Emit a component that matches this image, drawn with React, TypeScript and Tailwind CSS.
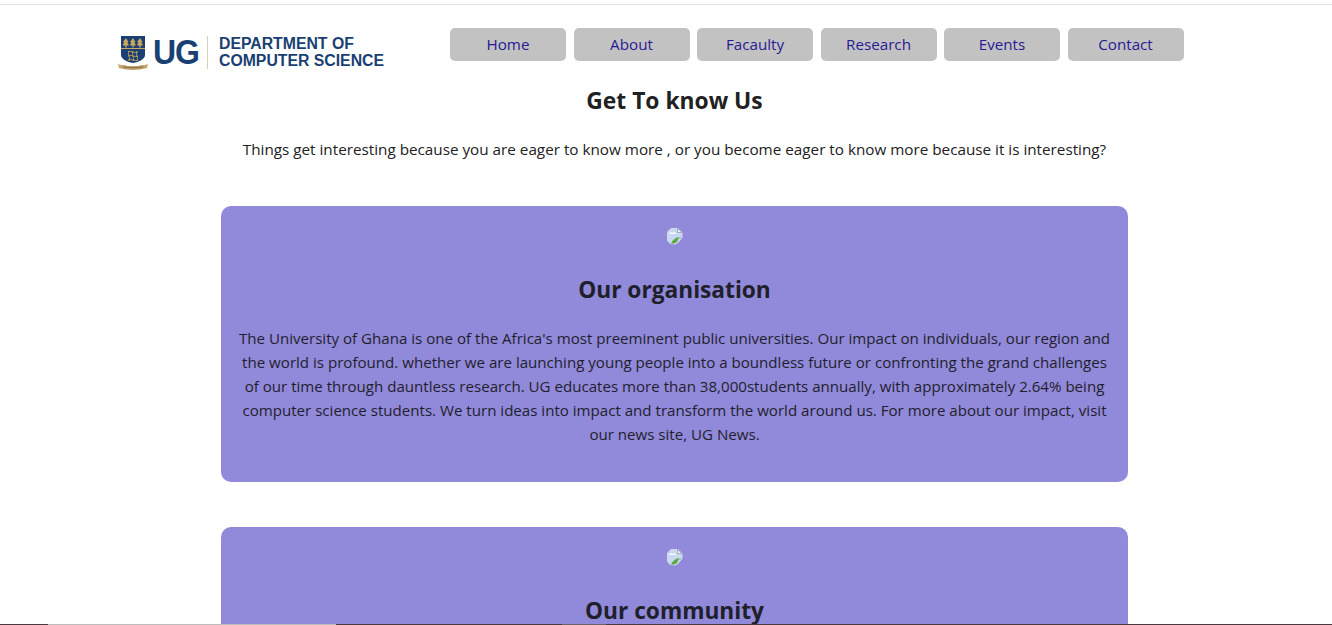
const navItems = ["Home", "About", "Facaulty", "Research", "Events", "Contact"];

function BrokenImage() {
  return (
    <svg width="16" height="17" viewBox="0 0 16 17" className="block">
      <path d="M4 0.500h7l4 4v5l-4 5-3 1.500-5-0.500-2.500-3V4z" fill="#c6d8f2" stroke="#d6d8e6" />
      <path d="M10.500 0.500v4h4.500z" fill="#f4f4f6" stroke="#8f90a0" strokeWidth="0.7" />
      <path d="M2 6c1-2 3-2 4-1 1-1 3-1 3 1z" fill="#fff" />
      <path d="M4 15.500c1-3 5-6 8-6.500l-2 5-3 1.500z" fill="#58a83f" />
      <path d="M12 10l2-1-1 2z" fill="#7a9a78" />
    </svg>
  );
}

function Crest() {
  return (
    <svg width="30" height="35" viewBox="0 0 30 35" className="block shrink-0">
      <path d="M3 0h24v19c0 4-6 7-12 8C9 26 3 23 3 19z" fill="#1a3f73" />
      <rect x="3" y="12" width="24" height="1" fill="#c9a75e" />
      <path d="M8 2l2.500 4-1.200 0 1.700 3.500h-2.300v2h-1.400v-2H4.500L6.200 6H5z" fill="#c9a75e" />
      <path d="M15 2l2.500 4-1.200 0 1.700 3.500h-2.300v2h-1.400v-2h-2.300L13.200 6H12z" fill="#c9a75e" />
      <path d="M22 2l2.500 4-1.200 0 1.700 3.500h-2.300v2h-1.400v-2h-2.300L20.200 6H19z" fill="#c9a75e" />
      <path d="M10 16c3-2 7 2 10 0M10 20c3-2 7 2 10 0M10 24c3-2 7 2 10 0M11 15c-2 3 2 7 0 10M15 15c-2 3 2 7 0 10M19 15c-2 3 2 7 0 10" fill="none" stroke="#c9a75e" strokeWidth="0.9" />
      <path d="M0 28c2 1 4 1 6 1 3 1 6 1 9 1s6 0 9-1c2 0 4 0 6-1l-1 4c-4 1-9 2-14 2S5 33 1 32z" fill="#c2a66c" />
      <path d="M5 31c6 1 14 1 20 0" fill="none" stroke="#6d5a34" strokeWidth="0.8" />
    </svg>
  );
}

function Logo() {
  return (
    <div className="flex items-start w-[266px] h-[36px] font-['Liberation_Sans',sans-serif] text-[#1a3f73]">
      <Crest />
      <span className="ml-[5px] mt-[-2px] text-[32px] leading-[36px] font-bold tracking-[-1px] scale-y-[1.08]">UG</span>
      <span className="ml-[8px] w-px h-[33px] bg-[#d9cfb5]" />
      <div className="ml-[11px] mt-[-1px] font-bold text-[15.8px] leading-[17px] whitespace-nowrap">
        <div>DEPARTMENT OF</div>
        <div>COMPUTER SCIENCE</div>
      </div>
    </div>
  );
}

function Card({ title, children }: { title: string; children?: React.ReactNode }) {
  return (
    <section className="w-[907px] h-[276px] shrink-0 rounded-[10px] bg-[#9189d9] px-[15px] pt-[22px] text-center text-[#1f1f2e]">
      <div className="flex justify-center"><BrokenImage /></div>
      <h2 className="mt-[29px] text-[22.7px] leading-[32px] font-bold text-[#20202a]">{title}</h2>
      <p className="mt-[20px] text-[15.1px] leading-6">{children}</p>
    </section>
  );
}

export default function App() {
  return (
    <div className="h-screen overflow-hidden bg-white font-['Open_Sans',sans-serif] text-[#212121] relative">
      <div className="mt-1 h-px bg-[#e1e1e1]" />
      <header className="flex items-start pl-[118px] pt-[23px]">
        <div className="mt-[8px]"><Logo /></div>
        <nav className="ml-[66px] flex gap-[7.5px]">
          {navItems.map((item) => (
            <a key={item} className="w-[116px] h-[33px] pb-px rounded-[5px] bg-[#c2c2c2] flex items-center justify-center text-[15.2px] font-medium text-[#281a94]">
              {item}
            </a>
          ))}
        </nav>
      </header>
      <main className="flex flex-col items-center pl-[17px]">
        <h1 className="mt-[13px] text-[22.8px] leading-8 font-bold">Get To know Us</h1>
        <p className="mt-[20px] text-[15.25px] leading-6">Things get interesting because you are eager to know more , or you become eager to know more because it is interesting?</p>
        <div className="mt-[45px] flex flex-col gap-[45px]">
          <Card title="Our organisation">
            The University of Ghana is one of the Africa's most preeminent public universities. Our impact on individuals, our region and the world is profound. whether we are launching young people into a boundless future or confronting the grand challenges of our time through dauntless research. UG educates more than 38,000students annually, with approximately 2.64% being computer science students. We turn ideas into impact and transform the world around us. For more about our impact, visit our news site, UG News.
          </Card>
          <Card title="Our community" />
        </div>
      </main>
      <div className="fixed bottom-0 inset-x-0 h-px flex">
        <div className="w-[48px] bg-[#4a3a40]" />
        <div className="w-[288px] bg-[#bdbdbd]" />
        <div className="w-[226px] bg-[#4a3a40]" />
        <div className="w-[44px] bg-[#6a6266]" />
        <div className="flex-1 bg-[#4a3a40]" />
      </div>
    </div>
  );
}
